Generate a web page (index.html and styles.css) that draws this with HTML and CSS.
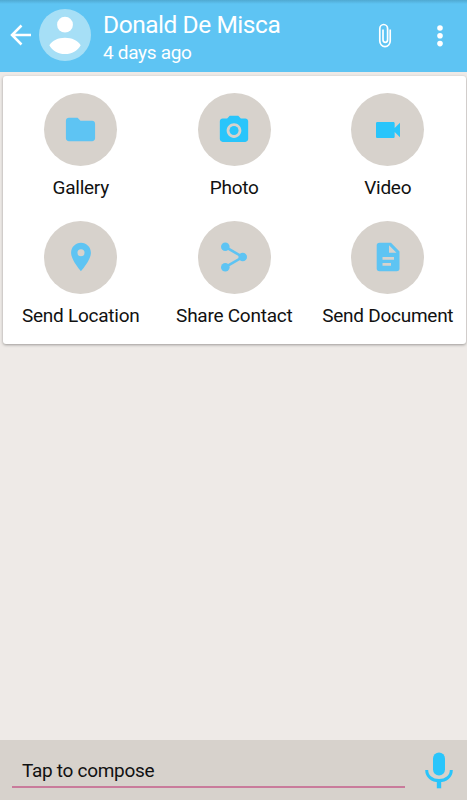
FILE: index.html
```html
<!DOCTYPE html>
<html lang="en">

<head>
    <meta charset="UTF-8">
    <meta name="viewport" content="width=device-width, initial-scale=1.0">
    <title>Chat</title>
    <link rel="stylesheet" href="styles.css">
</head>

<body>
    <header class="toolbar">
        <svg class="back" viewBox="0 0 22 22" width="22" height="22">
            <path d="M21 11H2M11.500 1.500L2 11l9.500 9.500" fill="none" stroke="#fff" stroke-width="2.500" />
        </svg>
        <svg class="avatar" viewBox="0 0 52 52" width="52" height="52">
            <circle cx="26" cy="26" r="26" fill="#a6dff6" />
            <circle cx="26" cy="15.700" r="7.900" fill="#fff" />
            <path d="M10.300 36.200C13.500 31.500 19 28.800 26 28.800s12.500 2.700 15.700 7.400C38.500 41.800 33 45 26 45s-12.500-3.200-15.700-8.800z" fill="#fff" />
        </svg>
        <div class="contact">
            <div class="name">Donald De Misca</div>
            <div class="status">4 days ago</div>
        </div>
        <svg class="attach" viewBox="0 0 14 26" width="14" height="26">
            <path d="M12.200 6.500V18a5.200 5.700 0 0 1-10.400 0V5.700a3.900 4.200 0 0 1 7.800 0V16.800a2.300 2.500 0 0 1-4.600 0V6.500" fill="none" stroke="#fff" stroke-width="1.700" />
        </svg>
        <svg class="more" viewBox="0 0 6 22" width="6" height="22">
            <g fill="#fff">
                <circle cx="3" cy="3" r="2.800" />
                <circle cx="3" cy="10.800" r="2.800" />
                <circle cx="3" cy="18.600" r="2.800" />
            </g>
        </svg>
    </header>

    <main class="chat">
        <div class="card">
            <div class="item">
                <div class="circle">
                    <svg viewBox="0 0 24 24" width="35" height="35">
                        <path d="M10 4H4c-1.100 0-2 .9-2 2v12c0 1.100.9 2 2 2h16c1.100 0 2-.9 2-2V8c0-1.100-.9-2-2-2h-8z" />
                    </svg>
                </div>
                <span>Gallery</span>
            </div>
            <div class="item">
                <div class="circle bright">
                    <svg viewBox="0 -0.400 24 24" width="34" height="34">
                        <circle cx="12" cy="12" r="3.200" />
                        <path d="M9 1.500L7.170 3.500H4c-1.100 0-2 .9-2 2v12.500c0 1.100.9 2 2 2h16c1.100 0 2-.9 2-2V5.500c0-1.100-.9-2-2-2h-3.170L15 1.500H9zm3 15.700c-2.870 0-5.200-2.330-5.200-5.200s2.330-5.200 5.200-5.200 5.200 2.330 5.200 5.200-2.330 5.200-5.200 5.200z" />
                    </svg>
                </div>
                <span>Photo</span>
            </div>
            <div class="item">
                <div class="circle bright">
                    <svg viewBox="0 0 24 24" width="32" height="32">
                        <path d="M17 10.500V7c0-.55-.45-1-1-1H4c-.55 0-1 .45-1 1v10c0 .55.45 1 1 1h12c.55 0 1-.45 1-1v-3.500l4 4v-11l-4 4z" />
                    </svg>
                </div>
                <span>Video</span>
            </div>
            <div class="item">
                <div class="circle">
                    <svg viewBox="0 0 24 24" width="34" height="34">
                        <path d="M12 2C8.130 2 5 5.130 5 9c0 5.250 7 13 7 13s7-7.750 7-13c0-3.870-3.130-7-7-7zm0 9.500a2.500 2.500 0 0 1 0-5 2.500 2.500 0 0 1 0 5z" />
                    </svg>
                </div>
                <span>Send Location</span>
            </div>
            <div class="item">
                <div class="circle">
                    <svg viewBox="0 0 34 34" width="34" height="34">
                        <path d="M8.300 6.800L25.700 17 8.300 27.200" fill="none" stroke="#5ec4f3" stroke-width="2.600" />
                        <circle cx="8.300" cy="6.800" r="4.300" />
                        <circle cx="25.700" cy="17" r="4.300" />
                        <circle cx="8.300" cy="27.200" r="4.300" />
                    </svg>
                </div>
                <span>Share Contact</span>
            </div>
            <div class="item">
                <div class="circle">
                    <svg viewBox="0 0 34 34" width="34" height="34">
                        <path fill-rule="evenodd" d="M8.500 2.800H20L28.500 11.500V28.500a2.800 2.800 0 0 1-2.800 2.800H8.500a2.800 2.800 0 0 1-2.800-2.800V5.600a2.800 2.800 0 0 1 2.800-2.800zM18 5.300V12.800H25.500zM11.500 17V19.700H23V17zM11.500 23V25.700H20V23z" />
                    </svg>
                </div>
                <span>Send Document</span>
            </div>
        </div>
    </main>

    <footer class="composer">
        <div class="field">Tap to compose</div>
        <svg class="mic" viewBox="0 0 28 37" width="28" height="37">
            <rect x="8" y="0.500" width="12" height="23" rx="6" fill="#29c5fb" />
            <path d="M1.700 18C1.700 24.500 7 28.600 14 28.600S26.300 24.500 26.300 18" fill="none" stroke="#29c5fb" stroke-width="3" />
            <path d="M14 28.600V36.300" fill="none" stroke="#29c5fb" stroke-width="4.400" />
        </svg>
    </footer>
</body>

</html>
```
FILE: styles.css
```css
* {
    box-sizing: border-box;
}

body {
    display: flex;
    flex-direction: column;
    height: 100vh;
    margin: 0;
    background-color: #eeeae7;
    color: #111;
    font-family: Roboto, sans-serif;
    overflow: hidden;
}

svg {
    display: block;
    flex: none;
}

.toolbar {
    display: flex;
    align-items: flex-start;
    height: 72px;
    padding: 9px 24px 0 10px;
    background: linear-gradient(#50a9d1, #5ec4f3 4px);
    color: #fff;
}

.back {
    margin-top: 15px;
}

.avatar {
    margin-left: 7px;
}

.contact {
    flex: 1;
    margin-left: 12px;
    white-space: nowrap;
}

.name {
    font-size: 24.5px;
    line-height: 31px;
    letter-spacing: -0.45px;
}

.status {
    font-size: 19px;
    line-height: 26px;
    letter-spacing: -0.3px;
}

.attach {
    margin-top: 14px;
}

.more {
    margin: 16px 0 0 45px;
}

.chat {
    flex: 1;
    padding: 4px 1px 0 3px;
}

.card {
    display: grid;
    grid-template-columns: repeat(3, 153.5px);
    grid-auto-rows: 127.5px;
    height: 268px;
    padding: 17px 0 0 1px;
    border-radius: 3px;
    background-color: #fff;
    box-shadow: 0 1px 3px rgba(0, 0, 0, 0.35);
}

.item {
    display: flex;
    flex-direction: column;
    align-items: center;
    font-size: 19px;
    line-height: 24px;
    letter-spacing: -0.25px;
    white-space: nowrap;
}

.circle {
    display: flex;
    align-items: center;
    justify-content: center;
    width: 73px;
    height: 73px;
    margin-bottom: 10px;
    border-radius: 50%;
    background-color: #d7d2cc;
    fill: #5ec4f3;
}

.bright {
    fill: #29c5fb;
}

.composer {
    display: flex;
    align-items: flex-start;
    height: 60px;
    padding: 12px 14px 0 12px;
    background-color: #d7d2cc;
}

.field {
    width: 393px;
    height: 36px;
    padding-left: 10px;
    border-bottom: 2px solid #c97b9b;
    font-size: 19px;
    line-height: 38px;
    letter-spacing: -0.3px;
}

.mic {
    margin-left: 20px;
}
```
